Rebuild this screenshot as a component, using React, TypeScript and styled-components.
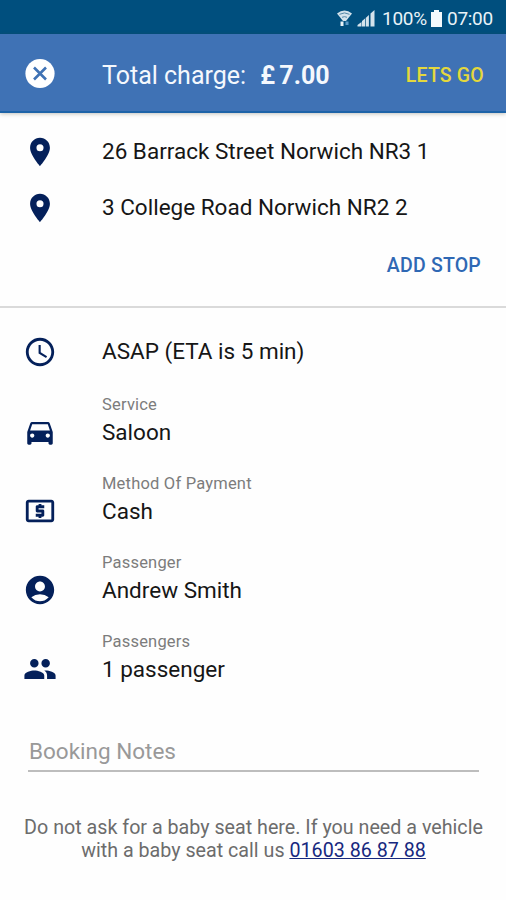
import React from 'react';
import styled, { createGlobalStyle } from 'styled-components';
import {
  MdAccessTime,
  MdAccountCircle,
  MdDirectionsCar,
  MdGroup,
  MdLocalAtm,
  MdPlace,
} from 'react-icons/md';

const GlobalStyle = createGlobalStyle`
  * { box-sizing: border-box; }
  body { margin: 0; background: #fefefe; font-family: Roboto, sans-serif; }
`;

const Screen = styled.main`
  width: 506px;
  height: 900px;
  overflow: hidden;
  display: flex;
  flex-direction: column;
  background: #fefefe;
`;

const StatusBar = styled.div`
  height: 34px;
  flex: none;
  display: flex;
  align-items: center;
  justify-content: flex-end;
  padding: 3px 11px 0 0;
  background: #004f7e;
  color: #e9f3f8;
  font-size: 19px;
`;

const StatusText = styled.span<{ $width: number }>`
  width: ${(p) => p.$width}px;
  letter-spacing: -0.3px;
  white-space: nowrap;
`;

const AppBar = styled.header`
  height: 79px;
  flex: none;
  display: grid;
  grid-template-columns: 102px 1fr auto;
  align-items: center;
  padding-right: 22px;
  background: #3f72b5;
  border-bottom: 2px solid #1d63a8;
  box-shadow: 0 1px 4px rgba(60, 60, 40, 0.3);
  color: #f4f8fd;
`;

const IconCell = styled.div`
  padding-left: 23px;
  display: flex;
  align-items: center;
  color: #04205a;
`;

const Charge = styled.h1`
  margin: 0;
  padding-top: 5px;
  font-size: 25px;
  font-weight: 400;
  letter-spacing: 0;
  white-space: nowrap;
`;

const Amount = styled.strong`
  margin-left: 8px;
  font-weight: 700;
  letter-spacing: 0;
  word-spacing: -2px;
`;

const TextButton = styled.button<{ $color: string; $spacing: number }>`
  border: 0;
  padding: 0;
  background: none;
  font: 500 19.5px/24px Roboto, sans-serif;
  letter-spacing: ${(p) => p.$spacing}px;
  color: ${(p) => p.$color};
`;

const GoButton = styled(TextButton)`
  padding-top: 6px;
`;

const Stops = styled.section`
  height: 195px;
  flex: none;
  padding-top: 11px;
  border-bottom: 2px solid #dadada;
`;

const Row = styled.div<{ $height: number }>`
  height: ${(p) => p.$height}px;
  display: grid;
  grid-template-columns: 102px 1fr;
  align-items: center;
`;

const Value = styled.div`
  font-size: 22.5px;
  line-height: 32px;
  padding-bottom: 2px;
  color: #161616;
  white-space: nowrap;
`;

const StopActions = styled.div`
  display: flex;
  justify-content: flex-end;
  padding: 18px 25px 0 0;
`;

const Details = styled.section`
  flex: none;
  padding-top: 16px;
`;

const Fields = styled.section`
  flex: none;
  padding-top: 13px;
`;

const Field = styled.div`
  height: 79.1px;
  display: grid;
  grid-template-columns: 102px 1fr;
  grid-template-rows: 24px 32px;
  align-items: center;
`;

const FieldIcon = styled(IconCell)`
  height: 30px;
  padding-bottom: 2px;
`;

const Label = styled.div`
  grid-column: 2;
  font-size: 16.5px;
  line-height: 24px;
  letter-spacing: 0.2px;
  color: #7c7c7c;
`;

const Notes = styled.input`
  margin: 22px 27px 0 28px;
  height: 41px;
  flex: none;
  padding: 1px 1px 0 1px;
  border: 0;
  border-bottom: 2px solid #bdbdbd;
  background: none;
  font: 400 22.5px Roboto, sans-serif;
  outline: none;
  &::placeholder { color: #999; opacity: 1; }
`;

const Footer = styled.p`
  margin: 44px 0 0;
  padding-left: 1px;
  font-size: 19.7px;
  line-height: 23px;
  text-align: center;
  color: #6c6c6c;
  white-space: nowrap;
`;

const Phone = styled.a`
  color: #17287f;
  text-decoration: underline;
  text-decoration-thickness: 1px;
`;

const CloseIcon = () => (
  <svg width="34" height="34" viewBox="0 0 34 34">
    <circle cx="17" cy="17.500" r="14.600" fill="#fff" />
    <path d="M11 11.500l12 12M23 11.500L11 23.500" stroke="#3f72b5" strokeWidth="2.600" />
  </svg>
);

const StatusIcons = () => (
  <svg width="45" height="22" viewBox="0 0 45 22">
    <path d="M0 5.500Q7.500 -.500 15 5.500L9 13H6Z" fill="#d4e3ec" />
    <path d="M2.500 6.300Q7.500 3.500 12.500 6.300M5 9.300Q7.500 8 10 9.300" fill="none" stroke="#5488a8" strokeWidth="1" />
    <path d="M3.500 13.500h3v4.500h-3z" fill="#e9f3f8" />
    <path d="M8.500 13.500h3v3.500h-3z" fill="#5d9cc8" />
    <path d="M20.500 18.500v-1.500l4-3v4.500zM25 18.500v-5.500l3-2.500v8zM28.700 18.500v-8.500l3.200-3v11.500zM33.500 18.500V5.500L37.500 2v16.500z" fill="#d4e3ec" />
  </svg>
);

const BatteryIcon = () => (
  <svg width="18" height="20" viewBox="0 0 18 20">
    <path d="M5 1h5v2h3v15H2V3h3z" fill="#f4f9fc" />
  </svg>
);

const stops = ['26 Barrack Street Norwich NR3 1', '3 College Road Norwich NR2 2'];

const fields = [
  { label: 'Service', value: 'Saloon', Icon: MdDirectionsCar },
  { label: 'Method Of Payment', value: 'Cash', Icon: MdLocalAtm },
  { label: 'Passenger', value: 'Andrew Smith', Icon: MdAccountCircle },
  { label: 'Passengers', value: '1 passenger', Icon: MdGroup },
];

export default function App() {
  return (
    <Screen>
      <GlobalStyle />
      <StatusBar>
        <StatusIcons />
        <StatusText $width={47}>100%</StatusText>
        <BatteryIcon />
        <StatusText $width={48}>07:00</StatusText>
      </StatusBar>
      <AppBar>
        <IconCell><CloseIcon /></IconCell>
        <Charge>Total charge: <Amount>£ 7.00</Amount></Charge>
        <GoButton $color="#e4d83c" $spacing={0.2}>LETS GO</GoButton>
      </AppBar>
      <Stops>
        {stops.map((stop) => (
          <Row $height={56} key={stop}>
            <IconCell><MdPlace size={34} /></IconCell>
            <Value>{stop}</Value>
          </Row>
        ))}
        <StopActions>
          <TextButton $color="#2f68b4" $spacing={0.2}>ADD STOP</TextButton>
        </StopActions>
      </Stops>
      <Details>
        <Row $height={56}>
          <IconCell><MdAccessTime size={34} /></IconCell>
          <Value>ASAP (ETA is 5 min)</Value>
        </Row>
      </Details>
      <Fields>
        {fields.map(({ label, value, Icon }) => (
          <Field key={label}>
            <Label>{label}</Label>
            <FieldIcon><Icon size={34} /></FieldIcon>
            <Value>{value}</Value>
          </Field>
        ))}
      </Fields>
      <Notes placeholder="Booking Notes" aria-label="Booking Notes" />
      <Footer>
        Do not ask for a baby seat here. If you need a vehicle
        <br />
        with a baby seat call us <Phone href="tel:01603868788">01603 86 87 88</Phone>
      </Footer>
    </Screen>
  );
}
